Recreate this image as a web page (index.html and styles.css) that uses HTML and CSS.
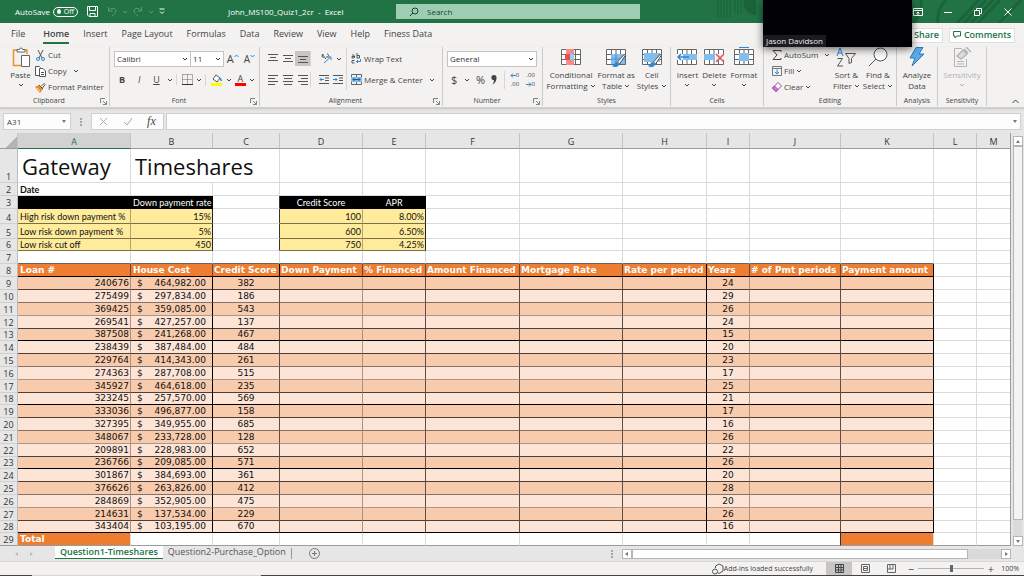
FILE: index.html
```html
<!DOCTYPE html>
<html lang="en">
  <head>
    <meta charset="UTF-8" />
    <meta name="viewport" content="width=device-width, initial-scale=1.0" />
    <title>John_MS100_Quiz1_2cr - Excel</title>
    <link rel="stylesheet" href="styles.css">
  </head>
  <body>
    <svg class="defs" aria-hidden="true">
      <symbol id="chev" viewBox="0 0 6 6"><path d="M1 2l2 2 2-2" fill="none" stroke="currentColor" /></symbol>
      <symbol id="launch" viewBox="0 0 7 7"><path d="M.5 5V.5H5M3 3l3 3M6.500 3v3.500H3" fill="none" stroke="#666" stroke-width=".8" /></symbol>
      <symbol id="grid" viewBox="0 0 20 16"><path d="M.5.5h19v15H.5zM.5 5.500h19M.5 10.500h19M5.500.5v15M10 .5v15M14.500.5v15" fill="#fff" stroke="#666" /></symbol>
      <symbol id="brush" viewBox="0 0 20 20"><path d="M18.500 6l-7 8 2 2 6-9z" fill="#fff" stroke="#555" /><path d="M11 14c-3 0-2 3-5 4 3 2 7 1 7-2z" fill="#2b88d8" /></symbol>
    </svg>

    <header class="titlebar">
      <svg class="pattern" viewBox="0 0 310 23" aria-hidden="true">
        <path d="M4 0v18M7 0v18M10 0v18M13 0v18M16 0v18M21 0v14M24 0v14M27 0v14" stroke="#1b633b" />
        <path d="M30 0a12 12 0 0 0 12 15V0z" fill="#1b633b" />
        <path d="M207 0a28 28 0 0 1-8 23M224 23a28 28 0 0 1 8-23M243 23l22-23M250 23l22-23M257 23l22-23M264 23l22-23M285 23l22-23" fill="none" stroke="#1b633b" stroke-width="3" />
      </svg>
      <div class="quick">
        <label for="autosave">AutoSave</label>
        <span class="toggle"><input type="checkbox" id="autosave" /><span>Off</span></span>
        <button class="save" aria-label="Save"><svg width="11" height="11" viewBox="0 0 11 11" fill="none" stroke="#fff"><path d="M.5.5h10v10H2l-1.500-1.500zM2.500.5v4h6v-4M3 10.500v-3h5v3" /></svg></button>
        <button class="dim" aria-label="Undo"><svg width="10" height="11" viewBox="0 0 10 11" fill="none" stroke="currentColor"><path d="M1.500 1v4h4M1.500 5C4 1 9 2 9 5c0 2-2 3-4 5" /></svg></button>
        <button class="dim" aria-label="Undo list"><svg width="6" height="6"><use href="#chev" /></svg></button>
        <button class="dim" aria-label="Redo"><svg width="10" height="11" viewBox="0 0 10 11" fill="none" stroke="currentColor"><path d="M8.500 1v4h-4M8.500 5C6 1 1 2 1 5c0 2 2 3 4 5" /></svg></button>
        <button class="dim" aria-label="Redo list"><svg width="6" height="6"><use href="#chev" /></svg></button>
        <button class="more" aria-label="Customize toolbar"><svg width="6" height="7" viewBox="0 0 6 7" fill="none" stroke="#fff"><path d="M.5 1h5M1 3.500l2 2 2-2" /></svg></button>
      </div>
      <div class="doc">John_MS100_Quiz1_2cr&nbsp; -&nbsp; Excel</div>
      <div class="search">
        <svg width="10" height="10" viewBox="0 0 10 10" fill="none" stroke="#14482b"><circle cx="6" cy="4" r="3" /><path d="M4 6L1 9" /></svg>
        <input type="text" placeholder="Search" aria-label="Search" />
      </div>
      <div class="window">
        <button aria-label="Ribbon display"><svg width="10" height="8" viewBox="0 0 10 8" fill="none" stroke="#fff"><path d="M.5.5h9v7h-9zM.5 2.500h9M5 7V4M3.500 5.500L5 4l1.500 1.500" /></svg></button>
        <button aria-label="Minimize"><svg width="8" height="8" viewBox="0 0 8 8" stroke="#fff"><path d="M0 4.500h8" /></svg></button>
        <button aria-label="Restore"><svg width="8" height="8" viewBox="0 0 8 8" fill="none" stroke="#fff"><path d="M.5 2.500h5v5h-5zM2.500 2.500v-2h5v5h-2" /></svg></button>
        <button aria-label="Close"><svg width="8" height="8" viewBox="0 0 8 8" stroke="#fff"><path d="M.5.5l7 7M7.500.5l-7 7" /></svg></button>
      </div>
    </header>

    <nav class="menu">
      <a href="#" class="file">File</a>
      <a href="#" class="active">Home</a>
      <a href="#">Insert</a>
      <a href="#">Page Layout</a>
      <a href="#">Formulas</a>
      <a href="#">Data</a>
      <a href="#">Review</a>
      <a href="#">View</a>
      <a href="#">Help</a>
      <a href="#">Finess Data</a>
      <button class="share">Share</button>
      <button class="comments"><svg width="8" height="8" viewBox="0 0 8 8" fill="none" stroke="#217346"><path d="M.5.5h7v4.500H3.500L2 7V5H.5z" /></svg>Comments</button>
    </nav>

    <div class="ribbon">
      <section class="group">
        <div class="body clip">
          <button class="big">
            <svg width="20" height="20" viewBox="0 0 20 20"><path d="M6 3H1.500v15.500H10M12 3h3v4" fill="none" stroke="#e8912d" stroke-width="1.500" /><path d="M5 5V2.500h2.500a1.500 1.500 0 0 1 3 0H13V5z" fill="#fff" stroke="#666" /><path d="M9.500 8.500h8v11h-8z" fill="#fff" stroke="#666" /></svg>
            <span>Paste</span>
            <svg width="6" height="6"><use href="#chev" /></svg>
          </button>
          <div class="rows">
            <button><svg width="11" height="11" viewBox="0 0 11 11" fill="none"><path d="M3 0l4 8M8 0L4 8" stroke="#555" /><circle cx="3" cy="9" r="1.500" stroke="#2b88d8" /><circle cx="8" cy="9" r="1.500" stroke="#2b88d8" /></svg>Cut</button>
            <button><svg width="11" height="11" viewBox="0 0 11 11" fill="#fff" stroke="#555"><path d="M4 9.500H.5v-9h4l1 1" /><path d="M4.500 2.500H8l2.500 2.500v5.500h-6zM6 6.500h3M6 8.500h3" /></svg>Copy <svg class="gap" width="6" height="6"><use href="#chev" /></svg></button>
            <button><svg width="11" height="11" viewBox="0 0 11 11"><path d="M0 5l4-2 4 4-3 4z" fill="#f08a24" /><path d="M2 6l3 3" stroke="#fff" stroke-width=".7" /><path d="M4 3l4 4M6 4.500L9 1.500l1 1L7.500 6" fill="#fff" stroke="#555" /></svg>Format Painter</button>
          </div>
        </div>
        <h2 class="more-options">Clipboard<svg width="7" height="7"><use href="#launch" /></svg></h2>
      </section>

      <section class="group">
        <div class="body font">
          <div class="line">
            <span class="drop family"><select aria-label="Font"><option>Calibri</option></select><svg width="6" height="6"><use href="#chev" /></svg></span>
            <span class="drop size"><select aria-label="Font size"><option>11</option></select><svg width="6" height="6"><use href="#chev" /></svg></span>
            <button class="grow">A<svg width="5" height="4" viewBox="0 0 5 4" fill="none" stroke="#2b88d8"><path d="M.5 3l2-2 2 2" /></svg></button>
            <button class="grow small">A<svg width="5" height="4" viewBox="0 0 5 4" fill="none" stroke="#2b88d8"><path d="M.5 1l2 2 2-2" /></svg></button>
          </div>
          <div class="line marks">
            <button class="mark"><b>B</b></button>
            <button class="mark"><i>I</i></button>
            <button class="mark"><u>U</u></button>
            <button aria-label="Underline list"><svg width="6" height="6"><use href="#chev" /></svg></button>
            <button class="sep" aria-label="Borders"><svg width="11" height="11" viewBox="0 0 11 11" fill="none" stroke="#666"><path d="M.5.5h10v10M.5.5v10M5.500.5v10M.5 5.500h10" stroke-dasharray="1 1" /><path d="M0 10.500h11" stroke="#333" /></svg></button>
            <button aria-label="Border list"><svg width="6" height="6"><use href="#chev" /></svg></button>
            <button class="sep" aria-label="Fill color"><svg width="11" height="12" viewBox="0 0 11 12"><path d="M2 5l3-4 4 3-3 4z" fill="#fff" stroke="#555" /><path d="M9 4l1.500 3" stroke="#2b88d8" stroke-width="1.500" /><path d="M0 9h11v3H0z" fill="#ff0" /></svg></button>
            <button aria-label="Fill list"><svg width="6" height="6"><use href="#chev" /></svg></button>
            <button class="ink">A</button>
            <button aria-label="Color list"><svg width="6" height="6"><use href="#chev" /></svg></button>
          </div>
        </div>
        <h2 class="more-options">Font<svg width="7" height="7"><use href="#launch" /></svg></h2>
      </section>

      <section class="group">
        <div class="body align">
          <div class="stack">
            <div class="line">
              <button aria-label="Top align"><svg width="10" height="9" viewBox="0 0 10 9" stroke="#555"><path d="M0 .5h10M2 3.500h6M0 6.500h10" /></svg></button>
              <button aria-label="Middle align"><svg width="10" height="9" viewBox="0 0 10 9" stroke="#555"><path d="M0 1.500h10M2 4.500h6M0 7.500h10" /></svg></button>
              <button class="on" aria-label="Bottom align"><svg width="10" height="9" viewBox="0 0 10 9" stroke="#555"><path d="M0 2.500h10M2 5.500h6M0 8.500h10" /></svg></button>
              <button class="wide sep" aria-label="Orientation"><svg width="11" height="11" viewBox="0 0 11 11" fill="none"><path d="M2.500 1.500a1.500 1.500 0 1 0 .1 3M1 1l4 5M6 1a1.500 1.500 0 1 1-1 2.500" stroke="#555" /><path d="M3 10l6.500-6M6.500 4H10v3" stroke="#2b88d8" /></svg><svg width="6" height="6"><use href="#chev" /></svg></button>
            </div>
            <div class="line">
              <button aria-label="Align left"><svg width="10" height="10" viewBox="0 0 10 10" stroke="#555"><path d="M0 .5h10M0 3.500h7M0 6.500h10M0 9.500h7" /></svg></button>
              <button aria-label="Center"><svg width="10" height="10" viewBox="0 0 10 10" stroke="#555"><path d="M0 .5h10M1 3.500h8M0 6.500h10M1 9.500h8" /></svg></button>
              <button aria-label="Align right"><svg width="10" height="10" viewBox="0 0 10 10" stroke="#555"><path d="M0 .5h10M3 3.500h7M0 6.500h10M3 9.500h7" /></svg></button>
              <button class="wide sep" aria-label="Indent"><svg width="10" height="9" viewBox="0 0 10 9" fill="none" stroke="#555"><path d="M0 .5h10M6 3h4M6 5.500h4M0 8.500h10" /><path d="M5 4.500H1M2.500 3L1 4.500 2.500 6" stroke="#2b88d8" /></svg><svg width="10" height="9" viewBox="0 0 10 9" fill="none" stroke="#555"><path d="M0 .5h10M6 3h4M6 5.500h4M0 8.500h10" /><path d="M0 4.500h4M2.500 3L4 4.500 2.500 6" stroke="#2b88d8" /></svg></button>
            </div>
          </div>
          <div class="stack wrap">
            <button><svg width="11" height="11" viewBox="0 0 11 11" fill="none"><path d="M3 2H1M3.500 5V2.500M3 3.500H1V5h2M6 0v5M6 2.500h2.500V5H6M3.500 7.500H1V10h2.500" stroke="#555" /><path d="M9.500 6v2.500H5.500M7 7L5.500 8.500 7 10" stroke="#2b88d8" /></svg>Wrap Text</button>
            <button><svg width="11" height="11" viewBox="0 0 11 11" fill="none"><path d="M.5.5h10v10H.5zM5.500 0v11" stroke="#666" /><path d="M0 3h11v5H0z" fill="#83beec" /><path d="M2 5.500h7M3.500 4L2 5.500 3.500 7M7.500 4L9 5.500 7.500 7" stroke="#1f5f9a" /></svg>Merge &amp; Center <svg class="gap" width="6" height="6"><use href="#chev" /></svg></button>
          </div>
        </div>
        <h2 class="more-options">Alignment<svg width="7" height="7"><use href="#launch" /></svg></h2>
      </section>

      <section class="group">
        <div class="body num">
          <div class="line"><span class="drop format"><select aria-label="Number format"><option>General</option></select><svg width="6" height="6"><use href="#chev" /></svg></span></div>
          <div class="line figures">
            <button>$</button>
            <button aria-label="Currency list"><svg width="6" height="6"><use href="#chev" /></svg></button>
            <button>%</button>
            <button class="comma" aria-label="Comma style"><svg width="6" height="10" viewBox="0 0 6 10"><path d="M3 0a2.500 2.500 0 0 1 2.500 3C5.500 6 4 8.500 1 9.500 2.500 8 3 6.500 3 5.200A2.500 2.500 0 1 1 3 0z" fill="#444" /></svg></button>
            <button class="dec sep"><span><svg width="6" height="5" viewBox="0 0 6 5" fill="none" stroke="#2b88d8"><path d="M6 2.500H1M3 .5l-2 2 2 2" /></svg>0</span><span>.00</span></button>
            <button class="dec"><span>.00</span><span><svg width="6" height="5" viewBox="0 0 6 5" fill="none" stroke="#2b88d8"><path d="M0 2.500h5M3 .5l2 2-2 2" /></svg>0</span></button>
          </div>
        </div>
        <h2 class="more-options">Number<svg width="7" height="7"><use href="#launch" /></svg></h2>
      </section>

      <section class="group">
        <div class="body styles">
          <button class="big">
            <svg width="20" height="20" viewBox="0 -2 20 20"><use href="#grid" width="20" height="16" /><path d="M5 0h8v5H5zM5 11h8v5H5z" fill="#f58b8b" /><path d="M4 5h5v6H4z" fill="#e35050" /><path d="M9 5h4v6H9z" fill="#9cc9ef" /></svg>
            <span>Conditional<br />Formatting <svg width="6" height="6"><use href="#chev" /></svg></span>
          </button>
          <button class="big">
            <svg width="20" height="20" viewBox="0 -2 20 20"><use href="#grid" width="20" height="16" /><path d="M5 5h14v10H5z" fill="#83beec" /><path d="M5 10h14M10 5v10" stroke="#4a8fca" /><use href="#brush" width="20" height="20" y="-1" /></svg>
            <span>Format as<br />Table <svg width="6" height="6"><use href="#chev" /></svg></span>
          </button>
          <button class="big">
            <svg width="20" height="20" viewBox="0 -2 20 20"><use href="#grid" width="20" height="16" /><path d="M2 4h16v9H2z" fill="#83beec" /><use href="#brush" width="20" height="20" y="-1" /></svg>
            <span>Cell<br />Styles <svg width="6" height="6"><use href="#chev" /></svg></span>
          </button>
        </div>
        <h2>Styles</h2>
      </section>

      <section class="group">
        <div class="body cells">
          <button class="big">
            <svg width="20" height="20" viewBox="0 -2 20 20"><use href="#grid" width="20" height="16" /><path d="M6 5h14v6H6z" fill="#83beec" /><path d="M0 5h6v6H0z" fill="#f3f2f1" /><path d="M12 8H1M4 5L1 8l3 3" fill="none" stroke="#2b88d8" stroke-width="1.500" /></svg>
            <span>Insert</span><svg width="6" height="6"><use href="#chev" /></svg>
          </button>
          <button class="big">
            <svg width="20" height="20" viewBox="0 -2 20 20"><use href="#grid" width="20" height="16" /><path d="M0 5h11v6H0z" fill="#83beec" /><path d="M11 5h9v6h-9z" fill="#f3f2f1" /><path d="M12 5l8 8M20 5l-8 8" stroke="#e35050" stroke-width="1.500" /></svg>
            <span>Delete</span><svg width="6" height="6"><use href="#chev" /></svg>
          </button>
          <button class="big">
            <svg width="20" height="20" viewBox="0 -2 20 20"><use href="#grid" width="20" height="16" /><path d="M5 4h10v8H5z" fill="#83beec" /><path d="M5-1.500h10" stroke="#2b88d8" /></svg>
            <span>Format</span><svg width="6" height="6"><use href="#chev" /></svg>
          </button>
        </div>
        <h2>Cells</h2>
      </section>

      <section class="group">
        <div class="body edit">
          <div class="rows">
            <button><svg width="10" height="10" viewBox="0 0 10 10" fill="none" stroke="#444"><path d="M9 2V.5H1L5 5 1 9.500h8V8" /></svg>AutoSum <svg class="gap" width="6" height="6"><use href="#chev" /></svg></button>
            <button><svg width="10" height="10" viewBox="0 0 10 10" fill="none"><path d="M.5.5h9v9h-9zM.5 2.500h9" stroke="#777" /><path d="M5 3.500V8M3 6l2 2 2-2" stroke="#2b88d8" /></svg>Fill <svg width="6" height="6"><use href="#chev" /></svg></button>
            <button><svg width="10" height="10" viewBox="0 0 10 10" fill="#fff" stroke="#a43bb0"><path d="M.5 6L6 .5 9.500 4 4 9.500z" /><path d="M.5 6l2-2L6 7.500l-2 2z" fill="#c77fd0" /></svg>Clear <svg width="6" height="6"><use href="#chev" /></svg></button>
          </div>
          <button class="big">
            <svg width="20" height="20" viewBox="0 0 20 20" fill="none"><path d="M1 9l3-8 3 8M2 6h4" stroke="#2b88d8" /><path d="M1.500 11.500h5L1.500 19h5.500" stroke="#555" /><path d="M9.500 6.500h10l-4 5v4l-2.500 1v-5z" stroke="#555" /></svg>
            <span>Sort &amp;<br />Filter <svg width="6" height="6"><use href="#chev" /></svg></span>
          </button>
          <button class="big">
            <svg width="20" height="20" viewBox="0 0 20 20" fill="none" stroke="#555"><circle cx="12.500" cy="7.500" r="6.500" fill="#fafafa" /><path d="M8 12l-7 7" /></svg>
            <span>Find &amp;<br />Select <svg width="6" height="6"><use href="#chev" /></svg></span>
          </button>
        </div>
        <h2>Editing</h2>
      </section>

      <section class="group">
        <div class="body">
          <button class="big">
            <svg width="20" height="20" viewBox="0 0 20 20"><path d="M9 .5h7L12 7h5L5 19l3-8H3z" fill="#5ea9e6" stroke="#2b78c2" /></svg>
            <span>Analyze<br />Data</span>
          </button>
        </div>
        <h2>Analysis</h2>
      </section>

      <section class="group">
        <div class="body">
          <button class="big off" disabled>
            <svg width="20" height="20" viewBox="0 0 20 20" fill="none" stroke="#b5b5b5"><path d="M10 1.500H2.500v18h12V12M5 14.500h7M5 17h7" /><path d="M5 9l6-6 4 4-6 5zM12 2l4 4M14 0l5 5" fill="#ddd" stroke-width="1.500" /></svg>
            <span>Sensitivity</span><svg width="6" height="6"><use href="#chev" /></svg>
          </button>
        </div>
        <h2>Sensitivity</h2>
      </section>

      <button class="collapse" aria-label="Collapse ribbon"><svg width="7" height="5" viewBox="0 0 7 5" fill="none" stroke="#444"><path d="M.5 4l3-3 3 3" /></svg></button>
    </div>

    <div class="formula">
      <div class="namebox"><input type="text" value="A31" aria-label="Name box" /><span class="tri"></span></div>
      <span class="dots"></span>
      <div class="fx">
        <button aria-label="Cancel"><svg width="9" height="9" viewBox="0 0 9 9" stroke="#aaa"><path d="M1 1l7 7M8 1L1 8" /></svg></button>
        <button aria-label="Enter"><svg width="10" height="9" viewBox="0 0 10 9" fill="none" stroke="#aaa"><path d="M1 5l3 3 5-7" /></svg></button>
        <button class="fn"><i>fx</i></button>
      </div>
      <div class="entry"><input type="text" aria-label="Formula bar" /><span class="tri"></span></div>
    </div>

    <main class="sheet">
      <div class="cells-area">
        <table>
          <colgroup>
            <col class="c0" /><col class="ca" /><col class="cb" /><col class="cc" /><col class="cd" /><col class="ce" /><col class="cf" />
            <col class="cg" /><col class="ch" /><col class="ci" /><col class="cj" /><col class="ck" /><col class="cl" /><col />
          </colgroup>
          <thead>
            <tr>
              <th class="corner"></th><th class="sel">A</th><th>B</th><th>C</th><th>D</th><th>E</th><th>F</th>
              <th>G</th><th>H</th><th>I</th><th>J</th><th>K</th><th>L</th><th>M</th>
            </tr>
          </thead>
          <tbody>
            <tr class="r1"><th>1</th><td class="title">Gateway</td><td class="title" colspan="2">Timeshares</td><td></td><td></td><td></td><td></td><td></td><td></td><td></td><td></td><td></td><td></td></tr>
            <tr class="h13"><th>2</th><td class="date">Date</td><td></td><td></td><td></td><td></td><td></td><td></td><td></td><td></td><td></td><td></td><td></td><td></td></tr>
            <tr class="h13"><th>3</th><td class="black"></td><td class="black right">Down payment rate</td><td class="edge"></td><td class="black mid">Credit Score</td><td class="black mid">APR</td><td></td><td></td><td></td><td></td><td></td><td></td><td></td><td></td></tr>
            <tr class="h15"><th>4</th><td class="key soft">High risk down payment %</td><td class="key right">15%</td><td class="edge"></td><td class="key right soft">100</td><td class="key right">8.00%</td><td></td><td></td><td></td><td></td><td></td><td></td><td></td><td></td></tr>
            <tr class="h15"><th>5</th><td class="key soft">Low risk down payment %</td><td class="key right">5%</td><td class="edge"></td><td class="key right soft">600</td><td class="key right">6.50%</td><td></td><td></td><td></td><td></td><td></td><td></td><td></td><td></td></tr>
            <tr class="h12"><th>6</th><td class="key soft">Low risk cut off</td><td class="key right">450</td><td class="edge"></td><td class="key right soft">750</td><td class="key right">4.25%</td><td></td><td></td><td></td><td></td><td></td><td></td><td></td><td></td></tr>
            <tr class="h13 above"><th>7</th><td></td><td></td><td></td><td></td><td></td><td></td><td></td><td></td><td></td><td></td><td></td><td></td><td></td></tr>
            <tr class="h13 heads"><th>8</th><td>Loan #</td><td>House Cost</td><td>Credit Score</td><td>Down Payment</td><td>% Financed</td><td>Amount Financed</td><td>Mortgage Rate</td><td>Rate per period</td><td>Years</td><td># of Pmt periods</td><td>Payment amount</td><td></td><td></td></tr>
          </tbody>
          <tbody id="loans"></tbody>
          <tbody>
            <tr class="h13 total"><th>29</th><td class="orange">Total</td><td></td><td></td><td></td><td></td><td></td><td></td><td></td><td></td><td class="edge"></td><td class="orange"></td><td></td><td></td></tr>
          </tbody>
        </table>
      </div>
      <div class="vscroll">
        <button aria-label="Scroll up"><span class="tri up"></span></button>
        <div class="track"><div class="thumb"></div></div>
        <button aria-label="Scroll down"><span class="tri"></span></button>
      </div>
    </main>

    <footer class="tabs">
      <button class="arrow" aria-label="Previous sheet"><span class="tri left"></span></button>
      <button class="arrow" aria-label="Next sheet"><span class="tri rightward"></span></button>
      <a href="#" class="tab current">Question1-Timeshares</a>
      <a href="#" class="tab">Question2-Purchase_Option</a>
      <button class="add" aria-label="New sheet"><svg width="11" height="11" viewBox="0 0 11 11" fill="none" stroke="#777"><circle cx="5.500" cy="5.500" r="5" /><path d="M5.500 3v5M3 5.500h5" /></svg></button>
      <span class="dots"></span>
      <div class="hscroll">
        <button aria-label="Scroll left"><span class="tri left"></span></button>
        <div class="track"><div class="thumb"></div></div>
        <button aria-label="Scroll right"><span class="tri rightward"></span></button>
      </div>
    </footer>

    <div class="status">
      <span class="addins"><svg width="12" height="12" viewBox="0 0 12 12" fill="none" stroke="#555"><path d="M3.500 5V3L7 1l4 2v5L7 10.500 5.500 9.500" /><circle cx="3" cy="8.500" r="2.500" /></svg>Add-ins loaded successfully</span>
      <button class="view on" aria-label="Normal"><svg width="9" height="9" viewBox="0 0 9 9" fill="none" stroke="#444"><path d="M.5.5h8v8h-8zM.5 3.500h8M.5 6h8M3.500.5v8M6 .5v8" /></svg></button>
      <button class="view" aria-label="Page layout"><svg width="9" height="9" viewBox="0 0 9 9" fill="none" stroke="#666"><path d="M.5.5h8v8h-8zM2.500 2.500h4v4h-4zM3 4.500h3" /></svg></button>
      <button class="view" aria-label="Page break"><svg width="9" height="9" viewBox="0 0 9 9" fill="none" stroke="#666"><path d="M.5 8.500v-8h8v8zM3 .5v4.500h3V.5M.5 5H3" /></svg></button>
      <button class="zoom">&minus;</button>
      <input type="range" min="0" max="100" value="50" aria-label="Zoom" />
      <button class="zoom">+</button>
      <span class="percent">100%</span>
    </div>

    <div class="webcam"><span>Jason Davidson</span></div>

    <script>
      // loan #, house cost, credit score, years
      const loans = [
        [240676, "464,982.00", 382, 24],
        [275499, "297,834.00", 186, 29],
        [369425, "359,085.00", 543, 26],
        [269541, "427,257.00", 137, 24],
        [387508, "241,268.00", 467, 15],
        [238439, "387,484.00", 484, 20],
        [229764, "414,343.00", 261, 23],
        [274363, "287,708.00", 515, 17],
        [345927, "464,618.00", 235, 25],
        [323245, "257,570.00", 569, 21],
        [333036, "496,877.00", 158, 17],
        [327395, "349,955.00", 685, 16],
        [348067, "233,728.00", 128, 26],
        [209891, "228,983.00", 652, 22],
        [236766, "209,085.00", 571, 26],
        [301867, "384,693.00", 361, 20],
        [376626, "263,826.00", 412, 28],
        [284869, "352,905.00", 475, 20],
        [214631, "137,534.00", 229, 26],
        [343404, "103,195.00", 670, 16],
      ];

      document.getElementById("loans").innerHTML = loans
        .map(
          ([id, cost, score, years], i) => `<tr>
            <th>${i + 9}</th><td class="right">${id}</td>
            <td><div class="money"><span>$</span><span>${cost}</span></div></td>
            <td class="mid">${score}</td><td></td><td></td><td></td><td></td><td></td>
            <td class="mid">${years}</td><td></td><td></td><td></td><td></td>
          </tr>`
        )
        .join("");
    </script>
  </body>
</html>
```
FILE: styles.css
```css
* {
  box-sizing: border-box;
}
body {
  margin: 0;
  height: 100vh;
  display: flex;
  flex-direction: column;
  background: #e6e6e6;
  color: #444;
  font-family: "Open Sans", "Noto Sans", sans-serif;
  font-size: 8px;
  line-height: 10px;
  overflow: hidden;
}
button,
input,
select {
  margin: 0;
  padding: 0;
  border: 0;
  background: none;
  color: inherit;
  font: inherit;
}
button {
  display: flex;
  align-items: center;
  justify-content: center;
  white-space: nowrap;
}
a {
  color: inherit;
  text-decoration: none;
}
svg {
  flex: none;
}
.defs {
  position: absolute;
  width: 0;
  height: 0;
}

/* title bar */
.titlebar {
  position: relative;
  flex: none;
  height: 23px;
  display: grid;
  grid-template-columns: 228px 168px 244px 1fr;
  align-items: center;
  background: #217346;
  color: #fff;
}
.pattern {
  position: absolute;
  top: 0;
  right: 0;
  width: 310px;
  height: 23px;
}
.quick {
  display: flex;
  align-items: center;
  padding-left: 15px;
}
.toggle {
  display: flex;
  align-items: center;
  width: 25px;
  height: 10px;
  margin-left: 3px;
  padding: 0 3px;
  border: 1px solid #fff;
  border-radius: 5px;
  font-size: 7px;
}
.toggle input {
  appearance: none;
  width: 5px;
  height: 5px;
  margin-right: 3px;
  border-radius: 50%;
  background: #fff;
}
.save {
  margin: 0 9px;
}
.dim {
  margin-right: 5px;
  color: #5b9a76;
}
.search {
  display: flex;
  align-items: center;
  gap: 8px;
  height: 15px;
  padding-left: 13px;
  background: #9fcdb3;
  color: #14482b;
  z-index: 1;
}
.search input {
  flex: 1;
}
.search input::placeholder {
  color: #14482b;
}
.window {
  display: flex;
  justify-content: flex-end;
  padding-right: 1px;
  z-index: 1;
}
.window button {
  width: 30px;
}

/* ribbon tabs */
.menu {
  flex: none;
  display: flex;
  align-items: center;
  gap: 14px;
  height: 24px;
  padding: 0 9px 0 11px;
  background: #f3f2f1;
  font-size: 9px;
}
.menu a {
  padding: 3px 0;
  border-bottom: 2px solid transparent;
  white-space: nowrap;
}
.menu .file {
  margin-right: 4px;
}
.menu .active {
  border-color: #217346;
  font-weight: 600;
}
.menu button {
  height: 15px;
  border: 1px solid #e1dfdd;
  background: #fff;
  color: #217346;
  font-weight: 600;
}
.menu .share {
  width: 46px;
  margin-left: auto;
  margin-right: -8px;
  padding-left: 13px;
}
.menu .comments {
  width: 66px;
  gap: 3px;
}

/* ribbon */
.ribbon {
  flex: none;
  display: grid;
  grid-template-columns: 110px 150px 183px 100px 128px 93px 133px 41px 49px 1fr;
  height: 61px;
  background: #f3f2f1;
  border-bottom: 1px solid #d0cecd;
  box-shadow: 0 1px 2px #c4c4c4;
  z-index: 1;
}
.group {
  display: flex;
  flex-direction: column;
  min-width: 0;
  margin-bottom: 1px;
  border-right: 1px solid #cdcbc9;
}
.group h2 {
  position: relative;
  margin: 0;
  font-size: 7px;
  line-height: 10px;
  font-weight: 400;
  text-align: center;
}
.group .more-options {
  padding-right: 11px;
}
.group h2 svg {
  position: absolute;
  right: 2px;
  bottom: 1px;
}
.body {
  flex: 1;
  display: flex;
  justify-content: center;
}
.big {
  flex-direction: column;
  justify-content: flex-start;
  line-height: 11px;
}
.big > span {
  margin-top: 2px;
}
.big > span + svg {
  margin-top: 2px;
}
.off {
  color: #b1b1b1;
}
.rows {
  display: flex;
  flex-direction: column;
}
.rows button {
  gap: 2px;
  height: 16px;
  justify-content: flex-start;
}
.rows .gap {
  margin-left: 4px;
}
.clip {
  justify-content: flex-start;
  gap: 3px;
  padding-left: 9px;
}
.clip .big > svg:first-child {
  margin-left: 3px;
}
.line {
  display: flex;
  align-items: center;
  height: 21px;
}
.drop {
  display: flex;
  align-items: center;
  height: 16px;
  padding: 0 2px;
  border: 1px solid #c6c4c2;
  background: #fff;
  color: #333;
}
.drop select {
  flex: 1;
  min-width: 0;
  appearance: none;
}
.font,
.num {
  flex-direction: column;
  justify-content: flex-start;
  padding: 1px 4px 0;
}
.family {
  width: 78px;
}
.size {
  width: 34px;
  margin-left: -1px;
}
.format {
  width: 90px;
}
.grow {
  align-items: flex-start;
  margin-left: 3px;
  font-size: 11px;
}
.small {
  margin-left: 5px;
  font-size: 10px;
}
.marks {
  justify-content: space-between;
  padding: 0 0 0 1px;
  font-size: 9px;
}
.mark {
  width: 14px;
}
.sep {
  padding-left: 5px;
  border-left: 1px solid #d8d6d4;
}
.ink {
  height: 12px;
  line-height: 9px;
  border-bottom: 3px solid #f00;
  width: 11px;
}
.align {
  justify-content: flex-start;
  padding: 1px 0 0 5px;
}
.align .line button {
  width: 15px;
  height: 15px;
}
.align .on {
  background: #c8c6c4;
}
.align .line .wide {
  width: 36px;
  gap: 4px;
}
.wrap {
  height: 42px;
  padding-left: 4px;
  border-left: 1px solid #d8d6d4;
}
.wrap button {
  gap: 2px;
  height: 21px;
}
.wrap .gap {
  margin-left: 4px;
}
.figures {
  justify-content: space-between;
  padding: 0 3px 0 4px;
  font-size: 11px;
}
.dec {
  flex-direction: column;
  align-items: flex-end;
  font-size: 6px;
  line-height: 9px;
}
.dec span {
  display: flex;
  align-items: center;
}
.styles {
  gap: 2px;
}
.cells {
  gap: 4px;
}
.edit {
  justify-content: flex-start;
  gap: 3px;
  padding-left: 8px;
}
.edit .rows {
  width: 58px;
}
.collapse {
  align-self: end;
  justify-self: end;
  margin: 0 5px 3px;
}

/* formula bar */
.formula {
  flex: none;
  display: flex;
  align-items: center;
  height: 25px;
  padding: 2px 3px 0;
}
.formula > div {
  display: flex;
  align-items: center;
  height: 17px;
  border: 1px solid #cfcfcf;
  background: #fdfdfd;
}
.namebox {
  width: 68px;
  padding: 0 4px 0 3px;
}
.namebox input,
.entry input {
  flex: 1;
  min-width: 0;
}
.dots {
  width: 2px;
  height: 8px;
  margin: 0 9px;
  border-left: 2px dotted #a6a6a6;
}
.fx {
  width: 73px;
  justify-content: space-around;
}
.fn {
  font: 12px "Liberation Serif", serif;
  color: #444;
}
.entry {
  flex: 1;
  margin-left: 2px;
  padding-right: 3px;
}
.tri {
  width: 0;
  height: 0;
  border: 2px solid transparent;
  border-top: 3px solid #777;
  border-bottom: 0;
}
.tri.up {
  border-top: 0;
  border-bottom: 3px solid #777;
}
.tri.left {
  border: 2px solid transparent;
  border-right: 3px solid #777;
  border-left: 0;
}
.tri.rightward {
  border: 2px solid transparent;
  border-left: 3px solid #777;
  border-right: 0;
}

/* worksheet */
.sheet {
  flex: 1;
  min-height: 0;
  display: flex;
}
.cells-area {
  flex: 1;
  min-width: 0;
  overflow: hidden;
}
table {
  width: 100%;
  table-layout: fixed;
  border-collapse: separate;
  border-spacing: 0;
  background: #fff;
  color: #111;
  border-right: 1px solid #9b9b9b;
}
.c0 { width: 18px; }
.ca { width: 113px; }
.cb { width: 82px; }
.cc { width: 67px; }
.cd { width: 83px; }
.ce { width: 63px; }
.cf { width: 94px; }
.cg { width: 103px; }
.ch { width: 84px; }
.ci { width: 43px; }
.cj { width: 91px; }
.ck { width: 93px; }
.cl { width: 43px; }
th,
td {
  padding: 0 1px;
  border-right: 1px solid #dadada;
  border-bottom: 1px solid #dadada;
  white-space: nowrap;
  line-height: 11px;
}
th {
  background: #e6e6e6;
  font-size: 9px;
  font-weight: 400;
  color: #333;
}
thead th {
  height: 16px;
  padding-top: 2px;
  border-right-color: #c3c3c3;
  border-bottom-color: #9b9b9b;
}
thead .sel {
  background: #d2d2d2;
  color: #217346;
  border-bottom-color: #217346;
}
.corner {
  background: linear-gradient(135deg, #e6e6e6 65%, #b4b4b4 65%);
}
tbody th {
  vertical-align: bottom;
  border-right-color: #bdbdbd;
  border-bottom-color: #d0d0d0;
}
td {
  font-family: Lato, sans-serif;
  font-size: 9px;
}
td:nth-child(2),
td:nth-child(3) {
  padding-left: 2px;
}
td:last-child,
th:last-child {
  border-right: 0;
}
.r1 { height: 34px; }
.h12 { height: 12px; }
.h13 { height: 13px; }
.h15 { height: 15px; }
#loans tr { height: 13px; }
#loans tr:nth-child(5n) { height: 12px; }
.r1 .title {
  padding: 1px 0 0 4px;
  font-family: "Open Sans", sans-serif;
  font-size: 22px;
  line-height: 26px;
}
.date {
  font-weight: 700;
}
.right {
  text-align: right;
}
.mid {
  text-align: center;
}
.black {
  background: #000;
  border-color: #000;
  color: #fff;
}
.edge {
  border-right-color: #333;
}
.key {
  background: #ffeb9c;
  border-right-color: #222;
  border-bottom-color: #7a7048;
}
.soft {
  border-right-color: #b5a66e;
}
.above td:nth-child(-n + 12) {
  border-bottom-color: #666;
}
.heads td,
.total td,
#loans td {
  font-family: "DejaVu Sans", sans-serif;
}
.heads td:nth-child(-n + 12),
.total .orange {
  background: #ed7d31;
  color: #fff;
  font-weight: 700;
}
.heads td:nth-child(-n + 12) {
  border-bottom-color: #000;
}
#loans tr:nth-child(odd) td:nth-child(-n + 12) {
  background: #f8cbad;
}
#loans tr:nth-child(even) td:nth-child(-n + 12) {
  background: #fce4d6;
}
/* rules fade in and out over every five rows */
#loans tr:nth-child(5n + 1) td:nth-child(-n + 12),
#loans tr:nth-child(5n + 4) td:nth-child(-n + 12) {
  border-bottom-color: #4a3f39;
}
#loans tr:nth-child(5n + 2) td:nth-child(-n + 12) {
  border-bottom-color: #86706a;
}
#loans tr:nth-child(5n + 3) td:nth-child(-n + 12) {
  border-bottom-color: #ab968a;
}
#loans tr:nth-child(5n) td:nth-child(-n + 12) {
  border-bottom-color: #000;
}
.heads td:nth-child(-n + 12),
#loans td:nth-child(-n + 12) {
  border-right-color: #5e4d44;
}
.heads td:nth-child(4),
.heads td:nth-child(9),
.heads td:nth-child(12),
#loans td:nth-child(3),
#loans td:nth-child(9),
#loans td:nth-child(12) {
  border-right-color: #000;
}
#loans td:nth-child(2),
#loans td:nth-child(5),
#loans td:nth-child(10) {
  border-right-color: #b08f7b;
}
.total td,
.total th {
  border-bottom-color: #9b9b9b;
}
.money {
  display: flex;
  justify-content: space-between;
  padding: 0 5px 0 4px;
}

/* scroll bars */
.vscroll {
  display: flex;
  flex-direction: column;
  width: 13px;
  padding: 3px 2px 0 2px;
}
.vscroll button,
.hscroll button {
  flex: none;
  width: 10px;
  height: 10px;
  border: 1px solid #b5b5b5;
  background: #fff;
}
.track {
  flex: 1;
  background: #dadada;
}
.thumb {
  background: #f3f3f3;
  border: 1px solid #b5b5b5;
}
.vscroll .thumb {
  width: 10px;
  height: 96%;
}
.hscroll {
  display: flex;
  flex: 0 0 38%;
  margin-right: 13px;
}
.hscroll .thumb {
  width: 91%;
  height: 10px;
  background: #fff;
}

/* sheet tabs */
.tabs {
  flex: none;
  display: flex;
  align-items: center;
  height: 15px;
  font-size: 9px;
  color: #555;
}
.arrow {
  width: 15px;
  opacity: 0.4;
}
.arrow:first-child {
  margin-left: 9px;
}
.tab {
  height: 13px;
  padding: 0 5px;
  line-height: 12px;
  align-self: flex-start;
}
.current {
  margin-left: 16px;
  background: #fff;
  border-bottom: 1px solid #217346;
  color: #217346;
  font-weight: 600;
}
.add {
  margin-right: auto;
  padding-left: 17px;
  border-left: 1px solid #999;
}

/* status bar */
.status {
  flex: none;
  display: flex;
  align-items: center;
  justify-content: flex-end;
  height: 15px;
  padding: 0 5px 1px 0;
  background:
    linear-gradient(90deg, #444 32px, #d6d6d6 32px 261px, #444 261px) bottom / 100% 1px no-repeat,
    #f3f2f1;
  border-top: 1px solid #d6d6d6;
}
.addins {
  display: flex;
  align-items: center;
  margin-right: 13px;
  font-size: 7px;
}
.view {
  width: 26px;
  height: 13px;
}
.view.on {
  background: #c8c6c4;
}
.zoom {
  width: 14px;
  font-size: 11px;
}
.status input {
  appearance: none;
  width: 66px;
  height: 1px;
  background: #b5b5b5;
}
.status input::-webkit-slider-thumb {
  appearance: none;
  width: 3px;
  height: 7px;
  background: #666;
}
.percent {
  width: 21px;
  text-align: right;
  font-size: 7px;
}

/* video call window floating over the workbook */
.webcam {
  position: absolute;
  top: 0;
  left: 763px;
  width: 149px;
  height: 47px;
  display: flex;
  align-items: flex-end;
  background: #020206;
  box-shadow: 0 2px 8px rgba(0, 0, 0, 0.6);
  z-index: 2;
}
.webcam span {
  padding: 1px 3px;
  background: #1c1c1f;
  color: #eee;
  font-size: 8px;
}
```
